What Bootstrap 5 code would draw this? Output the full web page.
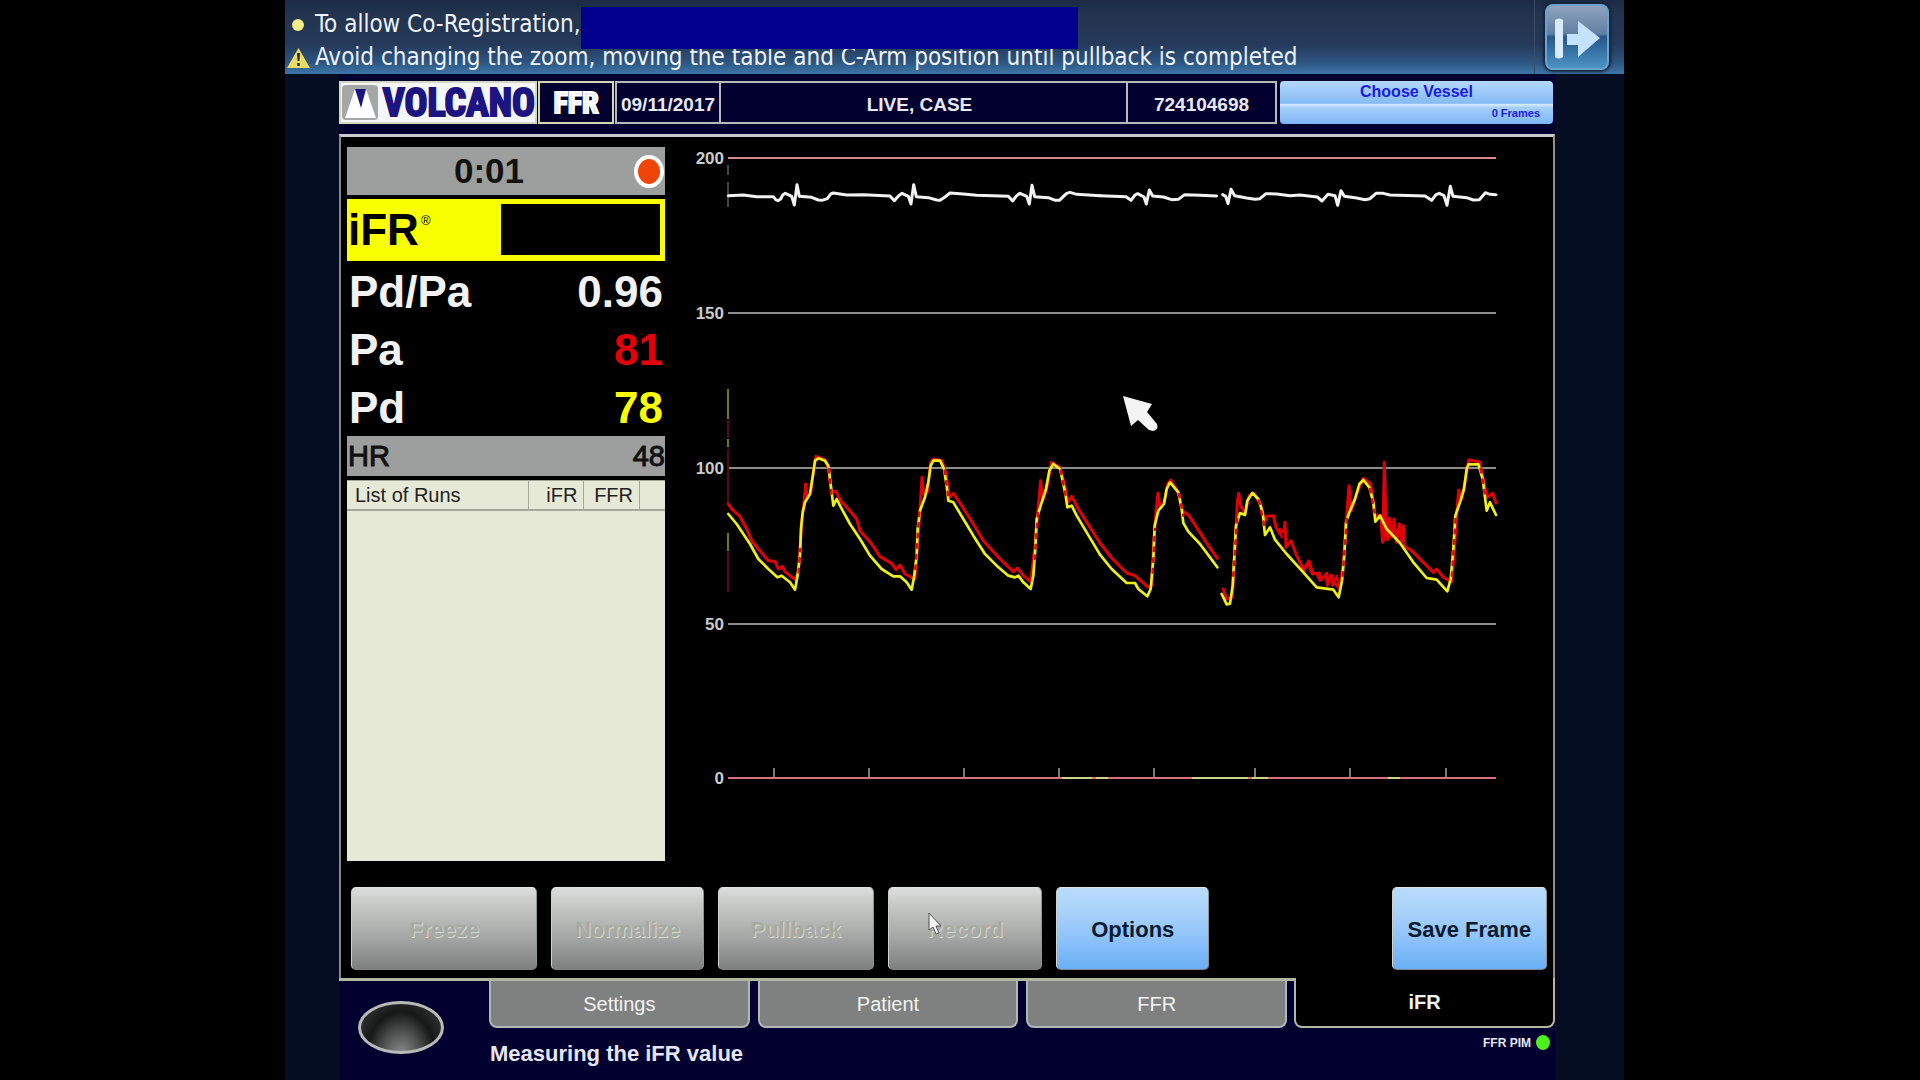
<!DOCTYPE html>
<html lang="en">
<head>
<meta charset="utf-8">
<meta name="viewport" content="width=device-width, initial-scale=1">
<title>iFR measurement</title>
<link rel="stylesheet" href="https://cdn.jsdelivr.net/npm/bootstrap@5.3.0/dist/css/bootstrap.min.css">
<style>
  body { background: #000; color: #fff; font-family: "Liberation Sans", Arial, sans-serif; line-height: 1; }
  .stage { display: grid; grid-template-columns: 285fr 1339fr 296fr; min-height: 100vh; }
  .console { grid-column: 2; min-width: 0; background: #050d22; }
  .banner { height: 74px; background: linear-gradient(#1b2b45 0, #23344f 20%, #25395a 60%, #2d5580 84%, #3d75a8 100%); font-family: "DejaVu Sans Condensed", "DejaVu Sans", sans-serif; font-size: 24px; line-height: 33px; padding: 8px 0 0 2px; color: #eef3fa; }
  .banner-icon { width: 23px; height: 20px; margin-right: 5px; }
  .mask { left: 296px; top: 7px; width: 497px; height: 42px; background: #00008c; }
  .banner-side { right: 0; top: 0; bottom: 0; width: 90px; border-left: 1px solid #3a4c66; }
  .btn-exit { width: 64px; height: 66px; margin: 4px 0 0 10px; padding: 0; border: 2px solid #6ba3cf; border-radius: 8px; background: linear-gradient(#8fa3bd 0, #5f7fa3 45%, #27578a 50%, #4b93c4 100%); box-shadow: 0 0 3px 2px #14233a; }
  .work { display: grid; grid-template-columns: 54fr 1216fr 69fr; flex: 1; }
  .deck { grid-column: 2; min-width: 0; background: #02002e; padding-top: 7px; }
  .head { display: grid; grid-template-columns: 198fr 78fr 106fr 407fr 149fr 278fr; height: 43px; font-size: 19px; font-weight: 700; margin-bottom: 10px; }
  .cell { border: 2px solid #b9b9bb; border-left-width: 0; min-width: 0; white-space: nowrap; color: #e8e8f4; padding-top: 4px; }
  .logo { background: #f4f6fa; color: #1c1480; font-family: "Roboto Condensed", "Liberation Sans", sans-serif; font-size: 38px; -webkit-text-stroke: 2px #1c1480; border: 2px solid #d5d7c4; min-width: 0; }
  .mode { border: 2px solid #d5d7b4; font-family: "Roboto Condensed", "Liberation Sans", sans-serif; font-size: 30px; -webkit-text-stroke: 2px #fff; margin: 0 1px; padding-top: 1px; }
  .c-date { border-left-width: 2px; }
  .vessel { min-width: 0; margin: 0 2px 0 3px; padding: 0; border: 0; border-radius: 4px; color: #1a1ae6; font-weight: 700; background: linear-gradient(#b4d8fa 0, #85bbf6 52%, #d8ecff 54%, #a4cffa 62%, #7db6f4 100%); font-size: 16px; line-height: 22px; text-align: center; }
  .vessel .frames { font-size: 11px; line-height: 21px; padding-right: 13px; text-align: right; display: block; }
  .panel { background: #000; border: 2px solid #85888a; border-top: 3px solid #c9cbd0; border-right: 2px solid #8f9282; border-bottom: 0; padding: 10px 0 8px 6px; }
  .readings { flex: 318 1 0; min-width: 0; margin-right: 25px; }
  .plot { flex: 863 1 0; min-width: 0; }
  .plot svg { display: block; width: 100%; height: auto; }
  .timer { height: 48px; background: #9c9f9d; color: #111; font-size: 35px; font-weight: 700; padding: 0 34px 2px 0; margin-bottom: 4px; }
  .rec { right: 1px; top: 8px; width: 30px; height: 33px; border-radius: 50%; border: 4px solid #fff; background: #f04408; }
  .ifr { height: 62px; background: #faff00; color: #000; font-size: 44px; font-weight: 700; padding: 5px 5px 6px 1px; }
  .ifr sup { font-size: 13px; font-weight: 400; top: -20px; margin-left: 2px; }
  .ifr output { width: 51%; background: #000; }
  .big { height: 58px; font-size: 44px; font-weight: 700; padding: 3px 2px 0 2px; color: #f2f2f2; }
  .hr-row { height: 40px; background: #9c9f9d; color: #111; font-size: 29px; padding-left: 1px; margin: 1px 0 4px; -webkit-text-stroke: 1px #111; }
  .v-red { color: #e3000b; }
  .v-yel { color: #faff00; }
  .runs { background: #e6e9d6; flex: 1; }
  .runs table { width: 100%; table-layout: fixed; font-size: 20px; color: #222; border-collapse: collapse; }
  .runs th { height: 29px; font-weight: 400; padding: 0 6px 0 8px; border: solid #a5a79a; border-width: 1px 1px 2px 0; white-space: nowrap; line-height: 24px; }
  .runs th:last-child { border-right: 0; }
  .keys { display: grid; grid-template-columns: 186fr 152fr 156fr 154fr 153fr 154fr 155fr; margin: 26px 6px 0 4px; gap: 14px; }
  .key { height: 83px; min-width: 0; padding: 2px 0 0; border: 1px solid #cfd2cf; border-color: #dfe4e4 #8f9496 #7f8484 #cfd2cf; border-radius: 5px; font-size: 22px; font-weight: 700; color: #0c1a30; white-space: nowrap; background: linear-gradient(#b9dcfb 0, #a8d2fa 30%, #8cc1f8 65%, #6aaff5 100%); position: relative; }
  .key:disabled { background: linear-gradient(#dadddb 0, #c2c5c2 25%, #a5a8a6 60%, #7d807e 100%); color: #a7aaa4; text-shadow: 1px 1px 0 #d3d6cb; opacity: 1; }
  .pointer { position: absolute; left: 39px; top: 24px; width: 14px; height: 24px; }
  .foot { display: grid; grid-template-columns: 150fr 1066fr; }
  .lamp-side { border-top: 3px solid #b3b7a0; padding: 20px 0 0 19px; }
  .lamp { width: 86px; height: 53px; padding: 0; border-radius: 50%; border: 3px solid #b8bab8; background: radial-gradient(ellipse at 50% 110%, #8b8f8d 0, #4a4e4c 35%, #151817 60%, #3c403e 100%); }
  .foot-main { min-width: 0; }
  .tabs { display: grid; grid-template-columns: 805fr 261fr; height: 50px; }
  .tabs-rest { display: grid; grid-template-columns: 1fr 1fr 1fr; border-top: 3px solid #b3b7a0; gap: 8px; padding-right: 7px; }
  .tab { border: 2px solid #b4b6b8; border-top: 0; border-radius: 0 0 8px 8px; background: #7e817f; color: #f3f3f3; font-size: 20px; padding: 0; }
  .tab.current { background: #000; border: 2px solid #b3b7a0; border-top: 0; font-weight: 700; }
  .status { font-size: 22px; font-weight: 700; color: #e6e6f6; padding: 7px 5px 0 1px; }
  .pim { font-size: 12px; }
  .pim-dot { width: 14px; height: 15px; border-radius: 50%; background: #4df01c; margin-left: 5px; }
</style>
<script src="https://cdn.jsdelivr.net/npm/bootstrap@5.3.0/dist/js/bootstrap.bundle.min.js"></script>
</head>
<body>
<div class="stage">
<main class="console d-flex flex-column">
  <header class="banner position-relative text-nowrap">
    <div class="d-flex align-items-center">
      <svg class="banner-icon" viewBox="0 0 23 20"><circle cx="11" cy="10" r="6" fill="#f3ee86"/></svg>
      <span>To allow Co-Registration,</span>
    </div>
    <div class="d-flex align-items-center">
      <svg class="banner-icon" viewBox="0 0 23 20"><path d="M11.500 0L23 20H0Z" fill="#e9da62"/><path d="M10 5h3l-.6 8h-1.800zM10.300 15h2.400v3h-2.400z" fill="#222"/></svg>
      <span>Avoid changing the zoom, moving the table and C-Arm position until pullback is completed</span>
    </div>
    <div class="mask position-absolute"></div>
    <div class="banner-side position-absolute">
      <button class="btn-exit" type="button" aria-label="Exit">
        <svg width="60" height="60" viewBox="0 0 60 60"><path d="M8 13q4-3 8 0v37q-4 3-8 0z" fill="#d9ebfb"/><path d="M20 27h11V14l22 17-22 19V38H20z" fill="#c4e2fb"/></svg>
      </button>
    </div>
  </header>
  <div class="work">
    <div class="deck">
      <div class="head">
        <div class="logo d-flex align-items-center justify-content-between">
          <svg width="38" height="37" viewBox="0 0 38 37" class="flex-shrink-0"><rect x="1" y="1" width="36" height="35" rx="4" fill="#a3a8a6"/><path d="M14 5h11l10 29H4z" fill="#fff"/><path d="M14 5h11l-5 19z" fill="#1c1480"/></svg>
          <span>VOLCANO</span>
        </div>
        <div class="cell mode d-flex align-items-center justify-content-center">FFR</div>
        <div class="cell c-date d-flex align-items-center justify-content-center">09/11/2017</div>
        <div class="cell d-flex align-items-center justify-content-center pe-2">LIVE, CASE</div>
        <div class="cell d-flex align-items-center justify-content-center">724104698</div>
        <button class="vessel" type="button">Choose Vessel<span class="frames">0 Frames</span></button>
      </div>
      <section class="panel">
        <div class="d-flex">
          <div class="readings d-flex flex-column">
            <div class="timer position-relative d-flex align-items-center justify-content-center">0:01<span class="rec position-absolute"></span></div>
            <div class="ifr d-flex justify-content-between"><span class="pt-1">iFR<sup>®</sup></span><output aria-label="iFR"></output></div>
            <div class="big d-flex justify-content-between align-items-center"><span>Pd/Pa</span><span>0.96</span></div>
            <div class="big d-flex justify-content-between align-items-center"><span>Pa</span><span class="v-red">81</span></div>
            <div class="big d-flex justify-content-between align-items-center"><span>Pd</span><span class="v-yel">78</span></div>
            <div class="hr-row d-flex justify-content-between align-items-center"><span>HR</span><span>48</span></div>
            <div class="runs">
              <table>
                <colgroup><col style="width:57%"><col style="width:17.5%"><col style="width:17.5%"><col></colgroup>
                <thead><tr><th scope="col">List of Runs</th><th scope="col" class="text-end">iFR</th><th scope="col" class="text-end">FFR</th><th></th></tr></thead>
              </table>
            </div>
          </div>
          <div class="plot">
            <svg viewBox="690 148 863 714" role="img" aria-label="Pressure waveforms">
              <g stroke="#8b8e8c" stroke-width="2"><path d="M728 314H1496M728 469H1496M728 625H1496"/></g>
              <path d="M728 159H1496" stroke="#d58a92" stroke-width="2"/>
              <path d="M774 769v10M869 769v10M964 769v10M1059 769v10M1154 769v10M1255 769v10M1350 769v10M1446 769v10" stroke="#777b79" stroke-width="2"/>
              <path d="M728 779H1496" stroke="#d8707f" stroke-width="2"/>
              <path d="M1062 779H1092M1096 779H1108M1192 779H1248M1252 779H1268M1388 779H1400" stroke="#c9d68a" stroke-width="2"/>
              <g fill="#c9cccb" font-size="17" font-weight="700" text-anchor="end">
                <text x="724" y="165">200</text><text x="724" y="320">150</text><text x="724" y="475">100</text><text x="724" y="631">50</text><text x="724" y="785">0</text>
              </g>
              <path d="M728 390v30M728 440v8M728 534v18" stroke="#6e7420" stroke-width="2"/>
              <path d="M728 421v18M728 450v54M728 553v40" stroke="#540a08" stroke-width="2"/>
              <path d="M728 166v10M728 183v25" stroke="#888"/>
              <g fill="none" stroke-linejoin="round" stroke-linecap="round">
                <!-- ECG -->
                <g stroke="#f2f2f2" stroke-width="9">
                  <path transform="translate(690 140) scale(.333333)" d="M115 170 160 168 200 173 250 173 257 182 264 185 272 180 278 168 286 163 305 172 313 198 321 137 328 172 365 175 385 183 396 184 412 179 422 165 430 162 470 168 520 167 600 171 613 185 626 170 636 163 655 172 663 195 671 137 679 173 715 176 740 183 750 184 765 174 780 162 820 165 860 169 955 172 968 186 980 170 990 163 1010 172 1018 195 1026 139 1034 173 1075 176 1096 184 1108 184 1130 163 1140 160 1160 166 1230 170"/>
                  <path transform="translate(1100 140) scale(.333333)" d="M0 170 78 173 93 184 105 168 113 164 132 174 139 195 148 153 158 171 190 174 215 182 235 181 254 167 300 169 350 171M368 167 377 172 384 194 393 151 404 170 440 177 465 181 480 179 498 164 530 165 570 170 600 168 652 174 666 186 684 166 705 170 713 199 723 155 733 172 770 177 795 182 810 179 828 163 850 163 870 168 975 171 995 184 1008 167 1018 163 1032 170 1041 199 1051 142 1059 172 1100 176 1120 183 1138 182 1156 161 1170 166 1188 167"/>
                </g>
                <!-- Pa -->
                <g stroke="#e0000a" stroke-width="9">
                  <path transform="translate(690 370) scale(.333333)" d="M115 405 125 420 150 442 170 480 185 515 205 540 235 575 255 577 265 600 277 592 285 608 315 632 325 610 330 540 335 460 342 400 347 345 351 385 362 370 370 310 378 262 405 272 416 300 424 370 438 367 452 395 475 420 500 450 510 485 545 525 570 563 605 583 618 602 630 588 645 615 675 630 683 520 690 420 696 325 701 375 712 370 722 280 730 270 756 275 768 315 778 385 790 373 810 402 850 465 880 515 930 570 970 608 982 597 1000 620 1022 638 1035 530 1045 410 1052 335 1058 395 1070 360 1084 280 1110 295 1124 350 1134 400 1145 382 1165 420 1200 475 1230 522"/>
                  <path transform="translate(1100 370) scale(.333333)" d="M0 522 35 567 80 612 105 620 145 655 155 650 160 540 168 430 174 372 180 415 192 402 203 345 212 333 235 370 247 425 265 437 290 475 325 530 352 568M370 660 380 690 397 685 405 540 412 400 416 373 422 410 435 435 447 380 462 373 482 408 494 460 500 442 520 440 528 475 540 495 553 480 555 460 558 535 573 515 590 560 610 600 628 578 638 615 658 612 666 632 680 612 684 645 696 620 706 645 720 660 730 580 738 470 747 350 754 425 770 375 790 328 812 345 825 440 842 440 848 520 853 280 858 450 863 512 868 448 875 505 882 450 890 520 898 464 905 515 910 470 912 530 935 545 965 575 1000 610 1010 600 1030 625 1055 638 1064 530 1072 410 1076 364 1085 390 1097 330 1106 273 1138 278 1152 340 1160 385 1178 373 1188 402"/>
                </g>
                <path transform="translate(1100 370) scale(.333333)" d="M600 580 612 610 625 575 632 608 650 615 660 635 676 618 682 650 690 618 698 650 710 620 720 665M848 465 852 515 856 455 862 510 M540 480 545 505" stroke="#e0000a" stroke-width="7"/>
                <!-- Pd -->
                <g stroke="#eef01a" stroke-width="8">
                  <path transform="translate(690 370) scale(.333333)" d="M115 435 140 465 180 525 205 570 235 600 262 625 275 620 300 640 315 662 322 625 330 560 333 480 338 430 345 400 360 375 370 310 375 275 385 268 405 275 415 290 420 330 425 370 430 410 440 390 450 410 480 465 510 510 540 560 575 600 610 622 630 622 650 640 665 662 672 625 680 560 683 480 690 425 705 385 715 340 722 290 730 275 750 275 762 300 770 350 775 395 790 400 820 450 850 500 885 555 920 590 955 620 975 625 985 620 1000 640 1022 660 1030 620 1036 540 1040 450 1055 400 1068 360 1078 305 1090 285 1110 300 1120 345 1127 380 1132 415 1145 410 1160 440 1190 490 1230 557"/>
                  <path transform="translate(1100 370) scale(.333333)" d="M0 557 35 600 80 642 105 642 115 660 142 682 152 660 160 570 164 470 175 425 192 405 200 360 210 340 235 370 245 420 250 462 265 488 300 525 330 565 352 595M365 675 380 706 390 704 398 650 403 560 408 470 420 432 435 438 442 395 457 372 475 390 488 430 495 498 510 475 525 512 560 555 610 610 650 655 700 662 716 685 726 635 733 560 738 460 750 425 765 390 778 345 790 333 808 355 820 400 826 458 840 440 860 480 900 522 940 580 980 627 1010 632 1042 667 1052 630 1060 540 1066 440 1080 400 1092 360 1100 300 1106 286 1135 286 1148 330 1155 385 1160 425 1170 400 1188 438"/>
                </g>
                <!-- Overlap of Pa and Pd on the steep edges -->
                <g stroke="#d81208" stroke-width="8" stroke-dasharray="10 22">
                  <path transform="translate(690 370) scale(.333333)" d="M416 300 427 395M326 610 331 540M764 305 776 390M676 600 688 430M1034 570 1044 430M1112 305 1130 395"/>
                  <path transform="translate(1100 370) scale(.333333)" d="M158 610 165 480M237 375 250 440M400 620 412 440M477 395 493 470M728 620 742 430M810 360 824 430M1056 620 1068 430M1142 300 1156 385"/>
                </g>
              </g>
              <path d="M1123 397 1152 405 1147 413 1157 425Q1159 431 1153 432L1149 431 1138 421 1131 427Z" fill="#f4f4f4"/>
            </svg>
          </div>
        </div>
        <div class="keys">
          <button class="key" type="button" disabled>Freeze</button>
          <button class="key" type="button" disabled>Normalize</button>
          <button class="key" type="button" disabled>Pullback</button>
          <button class="key" type="button" disabled>Record
            <svg class="pointer" viewBox="0 0 14 24"><path d="M1 1V18L5 15 8 22 11 21 8 14H13Z" fill="#f4f4f4" stroke="#555"/></svg>
          </button>
          <button class="key" type="button">Options</button>
          <span></span>
          <button class="key" type="button">Save Frame</button>
        </div>
      </section>
      <footer class="foot">
        <div class="lamp-side"><button class="lamp" type="button" aria-label="Menu"></button></div>
        <div class="foot-main">
          <nav class="tabs">
            <div class="tabs-rest">
              <button class="tab" type="button">Settings</button>
              <button class="tab" type="button">Patient</button>
              <button class="tab" type="button">FFR</button>
            </div>
            <button class="tab current" type="button">iFR</button>
          </nav>
          <div class="status d-flex justify-content-between align-items-start">
            <span class="pt-2">Measuring the iFR value</span>
            <span class="pim d-flex align-items-center">FFR PIM<span class="pim-dot"></span></span>
          </div>
        </div>
      </footer>
    </div>
  </div>
</main>
</div>
</body>
</html>
